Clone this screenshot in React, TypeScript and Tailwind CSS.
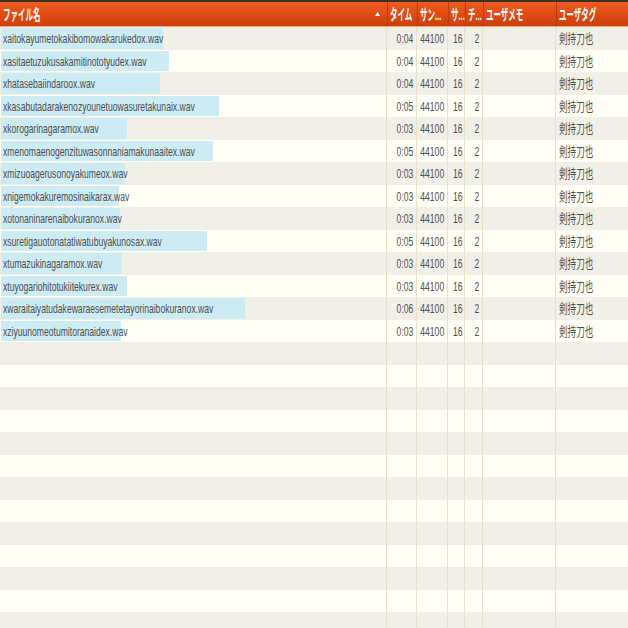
import React from "react";

type Clip = {
  name: string;
  time: string;
  bar: number;
};

const clips: Clip[] = [
  { name: "xaitokayumetokakibomowakarukedox.wav", time: "0:04", bar: 162 },
  { name: "xasitaetuzukusakamitinototyudex.wav", time: "0:04", bar: 168 },
  { name: "xhatasebaiindaroox.wav", time: "0:04", bar: 159 },
  { name: "xkasabutadarakenozyounetuowasuretakunaix.wav", time: "0:05", bar: 218 },
  { name: "xkorogarinagaramox.wav", time: "0:03", bar: 126 },
  { name: "xmenomaenogenzituwasonnaniamakunaaitex.wav", time: "0:05", bar: 212 },
  { name: "xmizuoagerusonoyakumeox.wav", time: "0:03", bar: 124 },
  { name: "xnigemokakuremosinaikarax.wav", time: "0:03", bar: 118 },
  { name: "xotonaninarenaibokuranox.wav", time: "0:03", bar: 119 },
  { name: "xsuretigauotonatatiwatubuyakunosax.wav", time: "0:05", bar: 206 },
  { name: "xtumazukinagaramox.wav", time: "0:03", bar: 121 },
  { name: "xtuyogariohitotukiitekurex.wav", time: "0:03", bar: 126 },
  { name: "xwaraitaiyatudakewaraesemetetayorinaibokuranox.wav", time: "0:06", bar: 244 },
  { name: "xziyuunomeotumitoranaidex.wav", time: "0:03", bar: 120 },
];

const TOTAL_ROWS = 27;

const font = {
  fontFamily: '"Liberation Sans", "Noto Sans CJK JP", sans-serif',
};

function Squeeze({ children }: { children: React.ReactNode }) {
  return (
    <span className="inline-block shrink-0 whitespace-nowrap scale-x-[0.66] origin-left">
      {children}
    </span>
  );
}

// right-aligned cell: flex-end lets the unscaled box overflow to the left
function NumCell({
  width,
  pad,
  value,
}: {
  width: string;
  pad: string;
  value?: string;
}) {
  return (
    <div
      className={`${width} ${pad} flex justify-end border-r border-[#e3e3cb] overflow-hidden`}
    >
      {value && (
        <span className="inline-block shrink-0 whitespace-nowrap scale-x-[0.66] origin-right">
          {value}
        </span>
      )}
    </div>
  );
}

function HeadLabel({ children }: { children: React.ReactNode }) {
  return (
    <span className="inline-block whitespace-nowrap scale-x-[0.5] origin-left">
      {children}
    </span>
  );
}

export default function App() {
  const rows = Array.from({ length: TOTAL_ROWS }, (_, i) => clips[i] ?? null);

  return (
    <div
      className="w-[628px] h-[628px] overflow-hidden bg-[#fffff5] text-[13px] text-[#4f4f4f]"
      style={font}
    >
      <div className="h-[2px] bg-[#3d3124]" />
      <div className="flex h-[25px] bg-gradient-to-b from-[#ef5d22] via-[#e04b14] to-[#c9400d] border-b border-[#f3a27a] text-white text-[15px] font-bold leading-[25px]">
        <div className="w-[387px] flex items-center pl-[3px] pr-[7px]">
          <div className="flex-1 overflow-hidden">
            <HeadLabel>ファイル名</HeadLabel>
          </div>
          <svg width="5" height="4" viewBox="0 0 5 4" className="mb-[1px]">
            <path d="M2.5 0 L5 4 L0 4 Z" fill="#ffffff" />
          </svg>
        </div>
        <div className="w-[30px] border-l border-[#b73c0d] pl-[2px] overflow-hidden">
          <HeadLabel>タイム</HeadLabel>
        </div>
        <div className="w-[31px] border-l border-[#b73c0d] pl-[2px] overflow-hidden">
          <HeadLabel>サン...</HeadLabel>
        </div>
        <div className="w-[17px] border-l border-[#b73c0d] pl-[2px] overflow-hidden">
          <HeadLabel>サ...</HeadLabel>
        </div>
        <div className="w-[18px] border-l border-[#b73c0d] pl-[2px] overflow-hidden">
          <HeadLabel>チ...</HeadLabel>
        </div>
        <div className="w-[73px] border-l border-[#b73c0d] pl-[2px] overflow-hidden">
          <HeadLabel>ユーザメモ</HeadLabel>
        </div>
        <div className="flex-1 border-l border-[#b73c0d] pl-[2px] overflow-hidden">
          <HeadLabel>ユーザタグ</HeadLabel>
        </div>
      </div>

      <div className="flex flex-col">
        {rows.map((clip, i) => (
          <div
            key={i}
            className={
              i % 2 === 0
                ? "flex h-[22.5px] shrink-0 bg-[#f0f0e8] leading-[24px]"
                : "flex h-[22.5px] shrink-0 bg-[#fffff5] leading-[24px]"
            }
          >
            <div className="relative w-[387px] border-r border-[#e3e3cb] overflow-hidden">
              {clip && (
                <>
                  <div
                    className="absolute left-px top-px bottom-px bg-[#cdebf3]"
                    style={{ width: clip.bar }}
                  />
                  <div className="relative pl-[3px]">
                    <Squeeze>{clip.name}</Squeeze>
                  </div>
                </>
              )}
            </div>
            <NumCell width="w-[30px]" pad="pr-[3px]" value={clip?.time} />
            <NumCell width="w-[31px]" pad="pr-[3px]" value={clip ? "44100" : undefined} />
            <NumCell width="w-[17px]" pad="pr-[2px]" value={clip ? "16" : undefined} />
            <NumCell width="w-[18px]" pad="pr-[3px]" value={clip ? "2" : undefined} />
            <div className="w-[73px] border-r border-[#e3e3cb]" />
            <div className="flex-1 pl-[3px] overflow-hidden">
              {clip && <Squeeze>剣持刀也</Squeeze>}
            </div>
          </div>
        ))}
      </div>
    </div>
  );
}
